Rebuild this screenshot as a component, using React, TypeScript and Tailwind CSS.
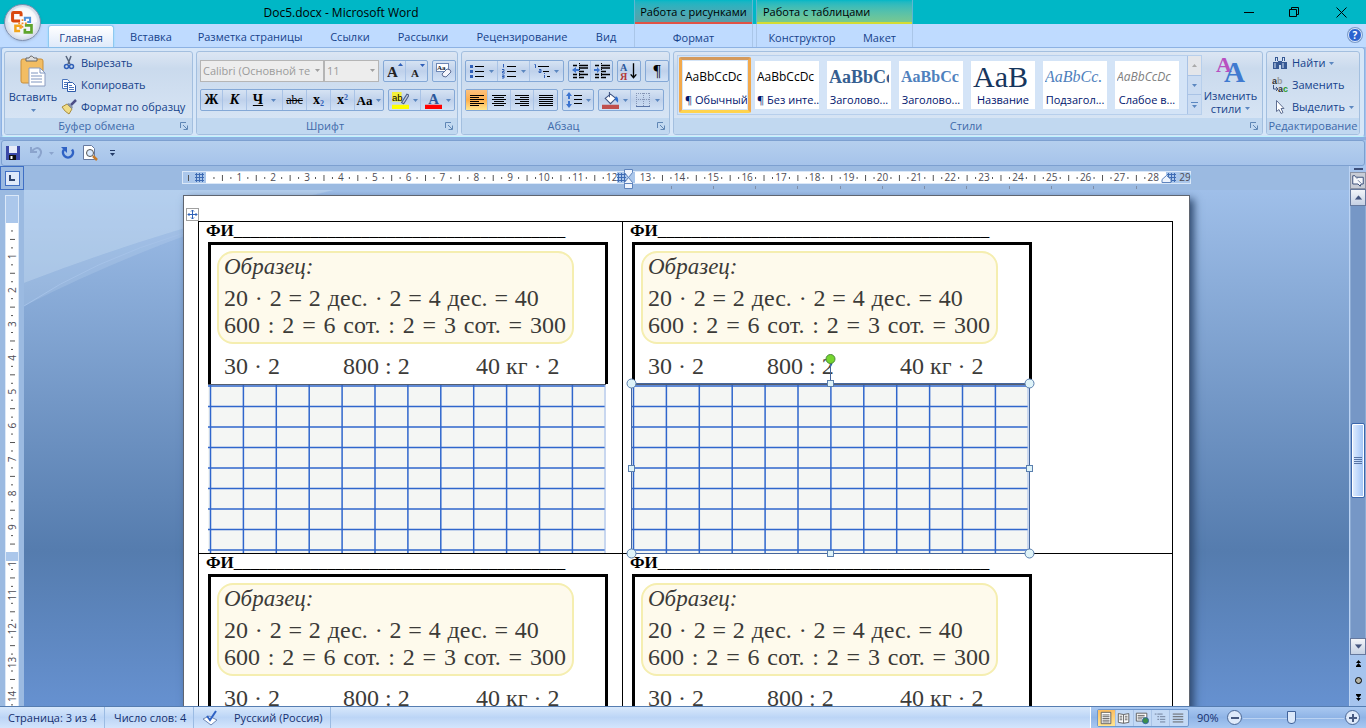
import { useState } from "react";
import type { ReactNode } from "react";
import clsx from "clsx";

const CM = 33.85;

const tabs = [
  { name: "Главная", width: "w-[66px]" },
  { name: "Вставка", width: "w-[74px]" },
  { name: "Разметка страницы", width: "w-[124px]" },
  { name: "Ссылки", width: "w-[76px]" },
  { name: "Рассылки", width: "w-[70px]" },
  { name: "Рецензирование", width: "w-[128px]" },
  { name: "Вид", width: "w-10" },
];

const styleCards = [
  { name: "¶ Обычный", sample: "AaBbCcDc", look: "font-['Open_Sans'] text-xs text-black", selected: true },
  { name: "¶ Без инте...", sample: "AaBbCcDc", look: "font-['Open_Sans'] text-xs text-black" },
  { name: "Заголово...", sample: "AaBbCc", look: "font-['Liberation_Serif'] text-lg font-bold text-[#365f91]" },
  { name: "Заголово...", sample: "AaBbCc", look: "font-['Liberation_Serif'] text-base font-bold text-[#4f81bd]" },
  { name: "Название", sample: "AaB", look: "font-['Liberation_Serif'] text-3xl text-[#17365d]" },
  { name: "Подзагол...", sample: "AaBbCc.", look: "font-['Liberation_Serif'] text-base italic text-[#4f81bd]" },
  { name: "Слабое в...", sample: "AaBbCcDc", look: "font-['Open_Sans'] text-xs italic text-[#808080]" },
];

function Drop({ className = "text-[#5b87c0]" }: { className?: string }) {
  return (
    <svg viewBox="0 0 5 3" className={clsx("h-[3px] w-[5px] shrink-0", className)}>
      <path d="M0 0h5L2.5 3z" fill="currentColor" />
    </svg>
  );
}

function Icon({ children, className = "size-4" }: { children: ReactNode; className?: string }) {
  return (
    <svg viewBox="0 0 16 16" fill="none" className={clsx("shrink-0", className)}>
      {children}
    </svg>
  );
}

function Group({ title, className, launcher = true, children }: { title: string; className?: string; launcher?: boolean; children: ReactNode }) {
  return (
    <section className={clsx("flex flex-col overflow-hidden rounded-[3px] border border-[#a3bfdf] bg-linear-to-b from-[#dce6f3] via-[#cadaed] via-20% to-[#dae7f6]", className)}>
      <div className="min-h-0 flex-1">{children}</div>
      <div className="flex h-4 shrink-0 items-center bg-[#c1d8f0] text-[#3e6aaa]">
        <h2 className={clsx("flex-1 text-center", launcher && "pl-3")}>{title}</h2>
        {launcher && (
          <button aria-label={title + ": параметры"} className="px-1">
            <svg viewBox="0 0 8 8" className="size-2" fill="none" stroke="#5f86b5">
              <path d="M.5 6V.5H6M3 3l4 4M7.5 3.5v4h-4" />
            </svg>
          </button>
        )}
      </div>
    </section>
  );
}

function Bar({ children }: { children: ReactNode }) {
  return (
    <div className="flex h-[22px] divide-x divide-[#a9c3e6] rounded-[2px] border border-[#84a8d6] bg-linear-to-b from-[#d6e3f3] via-[#bfd1eb] to-[#d2e2f6]">
      {children}
    </div>
  );
}

function Tool({ label, w = "w-[23px]", drop, active, children }: { label: string; w?: string; drop?: boolean; active?: boolean; children: ReactNode }) {
  return (
    <button
      aria-label={label}
      className={clsx(
        "flex items-center justify-center gap-1 font-['Liberation_Serif'] text-sm leading-none text-black",
        w,
        active && "bg-linear-to-b from-[#fcc17d] via-[#fdaf4c] to-[#ffe78f]"
      )}
    >
      {children}
      {drop && <Drop />}
    </button>
  );
}

function Lines({ d }: { d: string }) {
  return (
    <Icon>
      <path d={d} stroke="#000" />
    </Icon>
  );
}

function OfficeButton() {
  return (
    <button aria-label="Кнопка Office" className="absolute top-1 left-1 z-10 size-[37px] rounded-full border border-[#7f8fae] bg-radial from-white via-[#eef1f7] to-[#a9b6cf] shadow">
      <svg viewBox="0 0 37 37" className="size-full" fill="none">
        <path d="M3 18a15.500 15.500 0 0 1 31 0q-15 5-31 0" fill="#fff" opacity=".6" />
        <path d="M16 17H9q-1 0-1-1V9q0-1 1-1h7q1 0 1 1v3" stroke="#d9480f" strokeWidth="3.200" />
        <path d="M21 17v-3.500h5.500v4.500h-3" stroke="#4f93dc" strokeWidth="2.200" />
        <path d="M16 27.500h-5V22h5.500v3" stroke="#f2a51c" strokeWidth="2.600" />
        <path d="M21 21.500h7V29h-7v-4" stroke="#5fa52c" strokeWidth="2.800" />
        <path d="M14 19.500h2M17.500 19.500h2M21 19.500h2M18.500 15v2M18.500 22v2" stroke="#f08a2c" strokeWidth="1.800" />
      </svg>
    </button>
  );
}

function Header() {
  const [active, setActive] = useState("Главная");
  return (
    <header className="relative flex h-[47px] bg-linear-to-b from-[#00b7c6] from-[24px] to-[#bfdbff] to-[24px] text-[#15428b]">
      <OfficeButton />
      <div className="flex w-[634px] flex-col">
        <h1 className="flex h-6 items-center justify-center pt-0.5 pl-12 text-xs text-black">Doc5.docx - Microsoft Word</h1>
        <nav className="flex flex-1 pl-12">
          {tabs.map(({ name, width }) => (
            <button
              key={name}
              onClick={() => setActive(name)}
              className={clsx(
                "mt-0.5 h-[22px] rounded-t-[3px] pt-0.5 whitespace-nowrap",
                width,
                active === name && "border border-b-0 border-[#8fc8f0] bg-linear-to-b from-white to-[#dfeafa] shadow-[0_0_2px_#7fe0ff]"
              )}
            >
              {name}
            </button>
          ))}
        </nav>
      </div>
      <div className="flex w-[119px] flex-col border-x border-[#9db8d8]/60">
        <div className="flex h-6 items-center justify-center border-b-2 border-[#e05346] bg-linear-to-b from-[#00b7c6] to-[#58a0a8] pt-0.5 text-black">Работа с рисунками</div>
        <button className="flex-1 pt-1">Формат</button>
      </div>
      <div className="ml-[3px] flex w-[157px] flex-col border-x border-[#9db8d8]/60">
        <div className="flex h-6 items-center border-b-2 border-[#d5dc34] bg-linear-to-b from-[#00b7c6] to-[#78c890] pt-0.5 pl-1.5 text-black">Работа с таблицами</div>
        <div className="flex flex-1 pt-1">
          <button className="w-[90px]">Конструктор</button>
          <button className="flex-1">Макет</button>
        </div>
      </div>
      <div className="flex flex-1 flex-col">
        <div className="flex h-6 justify-end text-black">
          <button aria-label="Свернуть" className="flex w-[46px] items-center justify-center">
            <svg viewBox="0 0 11 11" className="size-[11px]" stroke="currentColor"><path d="M0 5.500h10" /></svg>
          </button>
          <button aria-label="Восстановить" className="flex w-11 items-center justify-center">
            <svg viewBox="0 0 11 11" className="size-[11px]" stroke="currentColor" fill="none"><path d="M.5 2.500h7v7h-7zM2.500 2.500v-2h7v7h-2" /></svg>
          </button>
          <button aria-label="Закрыть" className="flex w-[50px] items-center justify-center">
            <svg viewBox="0 0 11 11" className="size-[11px]" stroke="currentColor"><path d="M.5.5l10 10M10.500.5l-10 10" /></svg>
          </button>
        </div>
        <button aria-label="Справка" className="mt-1 mr-1 flex size-[14px] items-center justify-center self-end rounded-full border border-[#dbe8fb] bg-[#2a62cf] text-[10px] font-bold text-white ring-1 ring-[#7d9cc9]">?</button>
      </div>
    </header>
  );
}

function Clipboard() {
  return (
    <Group title="Буфер обмена" className="w-[189px]">
      <div className="flex">
        <button className="flex w-14 flex-col items-center pt-[3px]">
          <svg viewBox="0 0 28 32" className="h-8 w-7" fill="none">
            <rect x="2" y="4" width="22" height="24" rx="2" fill="#f2bd63" stroke="#c98f3b" />
            <path d="M7 6V3h3q2-4 5 0h3v3z" fill="#ddd" stroke="#666" />
            <path d="M10 13h11l5 5v13H10z" fill="#fff" stroke="#8a9cc0" />
            <path d="M21 13v5h5M12 18h7M12 21h11M12 24h11M12 27h11" stroke="#7f95bf" />
          </svg>
          <span className="h-4 pt-0.5">Вставить</span>
          <Drop className="mt-1.5 text-[#5b87c0]" />
        </button>
        <div className="flex flex-col">
          <button className="flex h-[22px] items-center gap-1">
            <Icon>
              <path d="M5 1l4 8M10 1L7 9" stroke="#56647c" strokeWidth="1.500" />
              <circle cx="5.500" cy="11.500" r="2" stroke="#2f5fb8" strokeWidth="1.500" />
              <circle cx="10.500" cy="11.500" r="2" stroke="#2f5fb8" strokeWidth="1.500" />
            </Icon>
            Вырезать
          </button>
          <button className="flex h-[22px] items-center gap-1">
            <Icon>
              <path d="M1.500 2.500h5l2 2v7h-7z" fill="#fff" stroke="#4a74bb" />
              <path d="M6.500 5.500h5l3 3v6h-8z" fill="#fff" stroke="#2d5aa8" />
              <path d="M8 8.500h3M8 10.500h5M8 12.500h5M3 5.500h3M3 7.500h3M3 9.500h3" stroke="#4a74bb" />
            </Icon>
            Копировать
          </button>
          <button className="flex h-[22px] items-center gap-1 whitespace-nowrap">
            <Icon>
              <path d="M1 8l5-3 5 5-3 5q-4-2-7-7" fill="#f0dc86" stroke="#a98c3c" />
              <path d="M6 5l2-1 4 4-1 2z" fill="#8893a8" />
              <path d="M10 6l5-5" stroke="#4c4f87" strokeWidth="2.500" />
            </Icon>
            Формат по образцу
          </button>
        </div>
      </div>
    </Group>
  );
}

function FontGroup() {
  return (
    <Group title="Шрифт" className="w-[262px]">
      <div className="flex flex-col gap-[7px] px-[3px] pt-2">
        <div className="flex gap-1">
          <div className="flex">
            <div className="relative">
              <select aria-label="Шрифт" disabled className="h-[22px] w-[124px] appearance-none overflow-hidden border border-[#b5b5b5] bg-[#ededed] pr-3 pl-0.5 text-[#9b9b9b]">
                <option>Calibri (Основной те</option>
              </select>
              <Drop className="absolute top-[9px] right-1 text-[#a0a0a0]" />
            </div>
            <div className="relative">
              <select aria-label="Размер шрифта" disabled className="h-[22px] w-[55px] appearance-none border border-[#b5b5b5] bg-[#ededed] pl-0.5 text-[#9b9b9b]">
                <option>11</option>
              </select>
              <Drop className="absolute top-[9px] right-1 text-[#a0a0a0]" />
            </div>
          </div>
          <Bar>
            <Tool label="Увеличить размер" w="w-[22px]"><Icon><path d="M11 3l2.500-3L16 3z" fill="#2f5fb8" /><text x="0" y="14" fill="#222" fontSize="15" fontWeight="bold">A</text></Icon></Tool>
            <Tool label="Уменьшить размер" w="w-[21px]"><Icon><path d="M11 1h5l-2.500 3z" fill="#2f5fb8" /><text x="2" y="14" fill="#222" fontSize="11" fontWeight="bold">A</text></Icon></Tool>
          </Bar>
          <Bar>
            <Tool label="Очистить формат" w="w-[22px]">
              <Icon>
                <rect x=".5" y=".5" width="12" height="8" fill="#fff" stroke="#6d87b5" />
                <text x="1" y="7" fill="#123" fontSize="7" fontWeight="bold">Aa</text>
                <path d="M6 11l5-5q4 0 4 3l-5 5q-4 0-4-3" fill="#f5f5fb" stroke="#5c6c93" />
              </Icon>
            </Tool>
          </Bar>
        </div>
        <div className="flex gap-1">
          <Bar>
            <Tool label="Полужирный" w="w-[22px]"><b>Ж</b></Tool>
            <Tool label="Курсив" w="w-6"><b className="italic">К</b></Tool>
            <Tool label="Подчеркнутый" w="w-9" drop><b className="mr-1 underline">Ч</b></Tool>
            <Tool label="Зачеркнутый" w="w-6"><span className="text-xs line-through">abc</span></Tool>
            <Tool label="Подстрочный" w="w-6"><b>x<sub className="text-[8px] text-[#2f5fb8]">2</sub></b></Tool>
            <Tool label="Надстрочный" w="w-6"><b>x<sup className="text-[8px] text-[#2f5fb8]">2</sup></b></Tool>
            <Tool label="Регистр" w="w-7" drop><b className="text-[13px]">Aa</b></Tool>
          </Bar>
          <Bar>
            <Tool label="Цвет выделения" w="w-8" drop>
              <Icon className="size-[17px]">
                <rect width="9" height="9" fill="#f4f13c" />
                <text x="0" y="8" fill="#000" fontSize="9" fontFamily="Liberation Sans">ab</text>
                <path d="M9 10l5-8 2 1-5 8z" fill="#c3cbe0" stroke="#4c6088" />
                <path d="M0 12h16v4H0z" fill="#ff0" />
              </Icon>
            </Tool>
            <Tool label="Цвет текста" w="w-[33px]" drop>
              <Icon className="size-[17px]">
                <text x="3" y="11" fill="#2b579a" fontSize="14" fontWeight="bold">A</text>
                <path d="M0 12h16v4H0z" fill="red" />
              </Icon>
            </Tool>
          </Bar>
        </div>
      </div>
    </Group>
  );
}

function Paragraph() {
  return (
    <Group title="Абзац" className="w-[209px]">
      <div className="flex flex-col gap-[7px] px-[3px] pt-2">
        <div className="flex gap-1">
          <Bar>
            <Tool label="Маркеры" w="w-8" drop>
              <Icon><path d="M6 3.500h9M6 8.500h9M6 13.500h9" stroke="#000" /><path d="M1 2h3v3H1zM1 7h3v3H1zM1 12h3v3H1z" fill="#2f5fb8" /></Icon>
            </Tool>
            <Tool label="Нумерация" w="w-8" drop>
              <Icon><path d="M6 3.500h9M6 8.500h9M6 13.500h9" stroke="#000" /><path d="M2.500 1v3.500M1 6.500h2v2H1.500v1.500H4M1 12h2v3H1m0-1.500h2" stroke="#2f5fb8" /></Icon>
            </Tool>
            <Tool label="Многоуровневый список" w="w-[33px]" drop>
              <Icon><path d="M4 3.500h11M9 8.500h6M13 13.500h3" stroke="#000" /><path d="M.5 1.500h1V5M5 6.500h2v3H5V8h2M10.500 10v1m0 1v3" stroke="#2f5fb8" /></Icon>
            </Tool>
          </Bar>
          <Bar>
            <Tool label="Уменьшить отступ" w="w-[22px]"><Icon><path d="M1 2.500h4M7 2.500h9M7 5h9M7 8.500h5M1 11.500h4M7 11.500h9M1 14.500h4M7 14.500h5" stroke="#000" strokeWidth="1.300" /><path d="M7.500 0v16" stroke="#000" strokeDasharray="1 1" /><path d="M0 7l4-3v2h3v2H4v2z" fill="#3c74d0" /></Icon></Tool>
            <Tool label="Увеличить отступ" w="w-[21px]"><Icon><path d="M1 2.500h4M7 2.500h9M7 5h9M7 8.500h5M1 11.500h4M7 11.500h9M1 14.500h4M7 14.500h5" stroke="#000" strokeWidth="1.300" /><path d="M7.500 0v16" stroke="#000" strokeDasharray="1 1" /><path d="M6 7L3 4v2H0v2h3v2z" fill="#3c74d0" /></Icon></Tool>
          </Bar>
          <Bar>
            <Tool label="Сортировка" w="w-[22px]">
              <Icon className="size-[18px]">
                <text x="0" y="8" fill="#2b579a" fontSize="9" fontWeight="bold">А</text>
                <text x="0" y="16" fill="#b33838" fontSize="9" fontWeight="bold">Я</text>
                <path d="M12 1v13M9.500 11l2.500 3 2.500-3" stroke="#000" strokeWidth="1.200" />
              </Icon>
            </Tool>
          </Bar>
          <Bar>
            <Tool label="Все знаки" w="w-[22px]"><span className="text-base leading-none">¶</span></Tool>
          </Bar>
        </div>
        <div className="flex gap-1">
          <Bar>
            <Tool label="По левому краю" w="w-[22px]" active><Lines d="M1 3.500h14M1 5.500h9M1 7.500h14M1 9.500h9M1 11.500h14M1 13.500h9" /></Tool>
            <Tool label="По центру"><Lines d="M1 3.500h14M3 5.500h10M1 7.500h14M3 9.500h10M1 11.500h14M3 13.500h10" /></Tool>
            <Tool label="По правому краю"><Lines d="M1 3.500h14M6 5.500h9M1 7.500h14M6 9.500h9M1 11.500h14M6 13.500h9" /></Tool>
            <Tool label="По ширине"><Lines d="M1 3.500h14M1 5.500h14M1 7.500h14M1 9.500h14M1 11.500h14M1 13.500h14" /></Tool>
          </Bar>
          <Bar>
            <Tool label="Междустрочный интервал" w="w-[30px]" drop>
              <Icon><path d="M0 4l3-4 3 4zM0 12l3 4 3-4zM2 4h2v3H2zM2 9h2v3H2z" fill="#3c74d0" /><path d="M8 3.500h8M8 7.500h8M8 11.500h8" stroke="#000" /></Icon>
            </Tool>
          </Bar>
          <Bar>
            <Tool label="Заливка" w="w-8" drop>
              <Icon className="size-[17px]">
                <path d="M3 6l5-4 5 4-5 5z" fill="#fff" stroke="#3f5482" />
                <path d="M7 0v5" stroke="#3f5482" />
                <path d="M13 4q3 1 2 6l-3-3z" fill="#2f6fcf" />
                <path d="M0 12h16v4H0z" fill="#c0504d" />
              </Icon>
            </Tool>
            <Tool label="Границы" w="w-8" drop>
              <Icon><path d="M1.500 1v13M8.500 1v13M14.500 1v13M1 1.500h14M1 7.500h14" stroke="#8595b5" strokeDasharray="1 1" /><path d="M1 14.500h14" stroke="#5a75a8" /></Icon>
            </Tool>
          </Bar>
        </div>
      </div>
    </Group>
  );
}

function Styles() {
  return (
    <Group title="Стили" className="min-w-0 flex-1">
      <div className="flex justify-between px-[3px] pt-[3px]">
        <div className="flex h-[60px] border border-[#b7cfec] bg-[#d4e4f7]">
          {styleCards.map(({ name, sample, look, selected }, i) => (
            <button key={i} className={clsx("my-px w-[72px] border-[3px] p-px first:ml-px last-of-type:mr-1", selected ? "rounded-[2px] border-[#f2a94c] border-t-[#d49a5c] border-b-[#ffd34e]" : "border-transparent")}>
              <span className="flex h-full flex-col overflow-hidden bg-white px-0.5">
                <span className={clsx("flex h-[31px] items-center overflow-hidden whitespace-nowrap leading-none", look)}>{sample}</span>
                <span className="text-center leading-4 whitespace-nowrap text-[#00156e]">{name}</span>
              </span>
            </button>
          ))}
          <div className="flex w-[14px] flex-col divide-y divide-[#a9c3e6] border-l border-[#a9c3e6] bg-[#cbdcf2]">
            <button aria-label="Вверх" disabled className="flex flex-1 items-center justify-center bg-[#e4e6ea]"><Drop className="rotate-180 text-[#aaa]" /></button>
            <button aria-label="Вниз" className="flex flex-1 items-center justify-center"><Drop /></button>
            <button aria-label="Все стили" className="flex flex-1 flex-col items-center justify-center gap-0.5"><span className="h-px w-[7px] bg-[#5b87c0]" /><Drop /></button>
          </div>
        </div>
        <button className="flex w-[60px] flex-col items-center">
          <svg viewBox="0 0 32 32" className="size-8" fontFamily="Liberation Serif" fontWeight="bold">
            <text x="1" y="17" fontSize="22" fill="#b84fc0">A</text>
            <text x="9" y="27" fontSize="29" fill="#3f7ad0">A</text>
          </svg>
          <span className="pt-0.5 leading-[13px]">Изменить</span>
          <span className="flex items-center gap-1 leading-[13px]">стили <Drop /></span>
        </button>
      </div>
    </Group>
  );
}

function Editing() {
  return (
    <Group title="Редактирование" className="w-[94px]" launcher={false}>
      <div className="flex flex-col pl-[5px]">
        <button className="flex h-[22px] items-center gap-1">
          <Icon>
            <path d="M3 2h3v4H3zM10 2h3v4h-3zM1 7h6v7H1zM9 7h6v7H9zM6 6h4v4H6z" fill="#385a94" />
            <path d="M3 8v5M11 8v5M4.500 3v3M11.500 3v3" stroke="#d8e5f8" />
          </Icon>
          Найти <Drop />
        </button>
        <button className="flex h-[22px] items-center gap-1">
          <Icon>
            <text x="0" y="7" fill="#333" fontSize="9" fontWeight="bold" fontFamily="Liberation Sans">a<tspan fill="#9a9a9a">b</tspan></text>
            <text x="6" y="15" fill="#333" fontSize="9" fontWeight="bold" fontFamily="Liberation Sans">a<tspan fill="#2a9a2a">c</tspan></text>
            <path d="M1.500 8v4h4M4 10l2 2-2 2" stroke="#3f5482" />
          </Icon>
          Заменить
        </button>
        <button className="flex h-[22px] items-center gap-1">
          <Icon><path d="M4.500 1.500v11l2.500-2 2 4 2-1-2-4h3z" fill="#fff" stroke="#5f6f92" /></Icon>
          Выделить <Drop />
        </button>
      </div>
    </Group>
  );
}

function QuickAccess() {
  return (
    <div className="mx-px flex h-[26px] items-center rounded-[3px] border border-[#7da0d0] bg-linear-to-b from-[#b5cfee] to-[#a6c3ea] pl-[3px]">
      <button aria-label="Сохранить">
        <Icon><path d="M1 1h14v14H1z" fill="#3b49a8" /><path d="M4 1h8v7H4z" fill="#e8ecf8" /><path d="M4 10h7v5H4z" fill="#111" /><path d="M5.500 11h2v3h-2z" fill="#fff" /></Icon>
      </button>
      <button aria-label="Отменить" disabled className="ml-2 flex items-center gap-1">
        <Icon><path d="M2 2v5h6M3 6q5-5 8-1.500T9 13" stroke="#8ba4cd" strokeWidth="2" /></Icon>
        <Drop className="text-[#8ba4cd]" />
      </button>
      <button aria-label="Повторить" className="ml-1.5">
        <Icon><path d="M4 4.500a5 5 0 1 0 8 0" stroke="#2f62c4" strokeWidth="2.500" /><path d="M1 2h6v6z" fill="#2f62c4" /></Icon>
      </button>
      <button aria-label="Предварительный просмотр" className="ml-1.5">
        <Icon><path d="M1.500.5h8l3 3v11h-11z" fill="#fff" stroke="#66799e" /><circle cx="8" cy="8" r="3.500" fill="#dcecff" stroke="#555" /><path d="M11 11l4 4" stroke="#c77a28" strokeWidth="2.500" /></Icon>
      </button>
      <button aria-label="Настройка панели" className="ml-3 flex flex-col items-center gap-0.5 text-[#223a66]"><span className="h-px w-[5px] bg-current" /><Drop className="text-[#223a66]" /></button>
    </div>
  );
}

function HashMark({ x }: { x: number }) {
  return <path d={`M${x} 8.500h9M${x} 11.500h9M${x} 14.500h9M${x + 1.5} 7v9M${x + 4.5} 7v9M${x + 7.5} 7v9`} stroke="#3f6cb4" />;
}

function HorizontalRuler() {
  return (
    <svg viewBox="0 0 1009 24" className="mx-auto h-6 w-[1009px] shrink-0 font-['Open_Sans'] text-[10px]" fill="none">
      <rect y="5" width="1009" height="13" fill="#dbe8f8" />
      <rect x="1" y="6" width="23" height="11" fill="#abc7eb" />
      <rect x="24" y="6" width="960" height="11" fill="#fff" />
      <rect x="984" y="6" width="24" height="11" fill="#abc7eb" />
      <rect x="435" y="6" width="18" height="11" fill="#abc7eb" />
      <path d="M6.500 9v6" stroke="#555" />
      {Array.from({ length: 29 }, (_, i) => {
        const x = 23.5 + i * CM;
        return (
          <g key={i}>
            {i < 28 && i !== 12 && <path d={`M${x + CM / 2} 9v6M${x + CM / 4} 11v2M${x + CM * 0.75} 11v2`} stroke="#555" />}
            {i > 0 && <text x={x} y="15" textAnchor="middle" fill="#4c4c55">{i}</text>}
          </g>
        );
      })}
      <text x="1003" y="15" textAnchor="middle" fill="#4c4c55">29</text>
      <HashMark x={13} />
      <HashMark x={435} />
      <HashMark x={985} />
      <path d="M442.500 3.500v3l4 5-4 5v6h8v-6l-4-5 4-5v-3zM442.500 17.500h8" fill="#eef4fd" stroke="#5f84bd" />
      <path d="M980 16.500v-3l4.500-4 4.500 4v3z" fill="#eef4fd" stroke="#5f84bd" />
      <path d="M489.500 20v3M531.500 20v3M573.500 20v3M615.500 20v3M658.500 20v3M700.500 20v3M742.500 20v3M784.500 20v3M827.500 20v3M869.500 20v3M911.500 20v3M954.500 20v3" stroke="#7d8da8" />
    </svg>
  );
}

function VerticalRuler() {
  return (
    <svg viewBox="0 0 24 516" className="h-[516px] w-6 shrink-0 bg-[#9bbae1] font-['Open_Sans'] text-[10px]" fill="none">
      <rect x="5" y="5" width="14" height="511" fill="#dbe8f8" />
      <rect x="6" y="6" width="12" height="27" fill="#abc7eb" />
      <rect x="6" y="33" width="12" height="483" fill="#fff" />
      {Array.from({ length: 15 }, (_, i) => {
        const y = 32.5 + i * CM;
        return (
          <g key={i}>
            <path d={`M10 ${y + CM / 2}h5M11 ${y + CM / 4}h2M11 ${y + CM * 0.75}h2`} stroke="#555" />
            {i > 0 && <text transform={`translate(16 ${y}) rotate(-90)`} textAnchor="middle" fill="#4c4c55">{i}</text>}
          </g>
        );
      })}
      <rect x="6" y="362" width="12" height="9" fill="#abc7eb" />
    </svg>
  );
}

function SquaredPaper({ selected }: { selected?: boolean }) {
  return (
    <div className="relative h-[169px] w-[398px]">
      <svg viewBox="0 0 398 169" className="size-full" fill="none">
        <rect width="398" height="169" fill="#f4f6f4" />
        {Array.from({ length: 9 }, (_, i) => (
          <path key={i} d={`M0 ${2 + i * 20.5}h397`} stroke="#2f66cc" strokeWidth="1.400" />
        ))}
        {Array.from({ length: 12 }, (_, i) => (
          <path key={i} d={`M${2.5 + i * 32.9} 0v169`} stroke="#2f66cc" strokeWidth="1.500" />
        ))}
        <path d="M397 0v169" stroke="#9db8ea" />
        <path d="M0 .5h398" stroke="#555f70" />
      </svg>
      {selected && (
        <svg viewBox="0 0 412 209" className="absolute -top-[33px] -left-[7px] z-10 h-[209px] w-[412px]" stroke="#5b7fae" fill="#dff3f8">
          <path d="M7.500 32.500h398v170h-398zM206.500 8v24" fill="none" stroke="#45669c" />
          <circle cx="206.500" cy="8" r="4.500" fill="#76d62e" stroke="#4c8a3a" />
          {[7.5, 405.5].map((x) => (
            <g key={x}>
              <circle cx={x} cy="32.500" r="4.500" />
              <circle cx={x} cy="202.500" r="4.500" />
              <rect x={x - 3} y="114.500" width="6" height="6" />
            </g>
          ))}
          <rect x="203.500" y="29.500" width="6" height="6" />
          <rect x="203.500" y="199.500" width="6" height="6" />
        </svg>
      )}
    </div>
  );
}

function Worksheet({ selected }: { selected?: boolean }) {
  return (
    <div className="h-[331px]">
      <p className="h-5 pl-[7px] text-[17px] leading-[18px] font-bold whitespace-nowrap">ФИ<span className="font-normal">{"_".repeat(39)}</span></p>
      <div className="ml-[9px] h-[142px] w-[400px] border-[3px] border-b-0 border-black pt-1.5 pl-1.5 text-2xl whitespace-nowrap text-[#3c3b38]">
        <div className="h-[93px] w-[357px] rounded-2xl border-2 border-[#f5eeb0] bg-[#fefaec] pl-[5px]">
          <p className="pb-1 text-[23px] leading-7 italic">Образец:</p>
          <p className="flex justify-between pr-[33px] leading-[27px]">{"20 · 2 = 2 дес. · 2 = 4 дес. = 40".split(" ").map((part, i) => <span key={i}>{part} </span>)}</p>
          <p className="flex justify-between pr-1.5 leading-[27px]">{"600 : 2 = 6 сот. : 2 = 3 сот. = 300".split(" ").map((part, i) => <span key={i}>{part} </span>)}</p>
        </div>
        <p className="grid grid-cols-[119px_133px_auto] pt-2 pl-[7px] leading-7">
          <span>30 · 2</span>
          <span>800 : 2</span>
          <span>40 кг · 2</span>
        </p>
      </div>
      <div className={selected ? "ml-2" : "ml-[9px]"}>
        <SquaredPaper selected={selected} />
      </div>
    </div>
  );
}

function Page() {
  return (
    <article className="mt-[5px] h-[1400px] w-[1007px] shrink-0 border border-[#5f6570] bg-white pt-[25px] pl-[14px] font-['Liberation_Serif',serif] text-black shadow-[4px_4px_8px_#2f4a70]">
      <table className="w-[975px] table-fixed border-collapse">
        <colgroup>
          <col className="w-[424px]" />
          <col />
        </colgroup>
        <tbody>
          {[0, 1].map((row) => (
            <tr key={row}>
              <td className="border border-black p-0 align-top"><Worksheet /></td>
              <td className="border border-black p-0 align-top"><Worksheet selected={row === 0} /></td>
            </tr>
          ))}
        </tbody>
      </table>
      <button aria-label="Выделить таблицу" className="absolute top-[18px] left-[3px] flex size-[13px] items-center justify-center border border-[#a0a0a0] bg-white">
        <svg viewBox="0 0 11 11" className="size-[11px]" stroke="#2f62b8" fill="none"><path d="M5.500 1v9M1 5.500h9M4 2.500l1.500-1.500L7 2.500M4 8.500l1.500 1.500L7 8.500M2.500 4L1 5.500 2.500 7M8.500 4L10 5.500 8.500 7" /></svg>
      </button>
    </article>
  );
}

function Scrollbar() {
  return (
    <aside className="flex w-[17px] flex-col border-l border-[#bcd4f4] bg-[#a6c4ee]">
      <div className="mx-auto my-[2px] h-0.5 w-[9px] shrink-0 bg-[#3c4f7a]" />
      <button aria-label="Линейка" className="flex h-[17px] items-center justify-center border border-[#8b93a5] bg-[#c8ccd6]">
        <Icon className="size-3"><path d="M1 1h3l2 2h9v9h-3l-1 3-3-3H1z" fill="#f4f6fb" stroke="#3c4f7a" strokeWidth="1.300" /><path d="M8 7l4 4M5 3l2 2" stroke="#3c4f7a" /></Icon>
      </button>
      <button aria-label="Прокрутить вверх" className="flex h-[17px] items-center justify-center border border-[#66799e] bg-linear-to-b from-[#f2f4f9] to-[#c6d1e4]"><Drop className="scale-150 rotate-180 text-[#44557f]" /></button>
      <div className="flex min-h-0 flex-1 flex-col border-x border-[#8eacd4] bg-[#7697c6]">
        <div className="flex-[218]" />
        <div className="flex h-[75px] flex-col items-center justify-center gap-px rounded-[2px] border border-[#3b67ac] bg-linear-to-r from-[#e4effd] via-[#bfd8fb] to-[#9fc2f5] ring-1 ring-white ring-inset">
          {[0, 1, 2, 3].map((n) => <span key={n} className="h-px w-2 bg-[#5875a5]" />)}
        </div>
        <div className="flex-[140]" />
      </div>
      <button aria-label="Прокрутить вниз" className="flex h-[17px] items-center justify-center border border-[#66799e] bg-linear-to-b from-[#f2f4f9] to-[#c6d1e4]"><Drop className="scale-150 text-[#44557f]" /></button>
      <div className="flex h-[51px] flex-col items-center justify-around">
        <button aria-label="Предыдущая страница"><svg viewBox="0 0 7 7" className="size-[7px]"><path d="M3.500 0L6 3H1zM3.500 3L6 6H1zM1 6h5v1H1z" /></svg></button>
        <button aria-label="Объект перехода" className="size-[7px] rounded-full border border-black bg-[#b5b3a5]" />
        <button aria-label="Следующая страница"><svg viewBox="0 0 7 7" className="size-[7px]"><path d="M1 0h5v1H1zM1 1h5L3.500 4zM1 4h5L3.500 7z" /></svg></button>
      </div>
    </aside>
  );
}

function StatusBar() {
  const [zoom, setZoom] = useState(90);
  return (
    <footer className="flex h-[22px] items-center border-t border-[#567db1] bg-linear-to-b from-[#d8e8fb] via-[#bcd5f6] via-50% to-[#d3e5fc] text-[#15306f]">
      <span className="w-[104px] pl-2">Страница: 3 из 4</span>
      <span className="flex h-full w-[89px] items-center border-l border-[#9bbbe3] pl-[9px]">Число слов: 4</span>
      <span className="flex h-full items-center border-l border-[#9bbbe3] px-2">
        <Icon><path d="M1 9l6-3 8 4-6 5z" fill="#fff" stroke="#6d87b5" /><path d="M5 6l3 4 6-9" stroke="#2f62c4" strokeWidth="2" /></Icon>
      </span>
      <span className="flex h-full w-[105px] items-center border-r border-[#9bbbe3] pl-2">Русский (Россия)</span>
      <div className="ml-auto flex h-full w-[276px] items-center border-l border-white bg-linear-to-b from-[#a9c8f1] via-[#8fb4e6] to-[#a8c8f2] pl-1.5">
        <div className="flex h-[18px] divide-x divide-[#a9c3e6] rounded-[2px] border border-[#6f97cd] bg-[#c3d9f5]">
          <button aria-label="Разметка страницы" className="w-[18px] bg-linear-to-b from-[#fbbd60] to-[#ffe591] px-px"><Icon className="size-[14px]"><path d="M2.500 1.500h11v13h-11z" fill="#fff" stroke="#555" /><path d="M4 4.500h8M4 6.500h8M4 8.500h8M4 10.500h8M4 12.500h8" stroke="#555" /></Icon></button>
          <button aria-label="Режим чтения" className="w-[18px] px-px"><Icon className="size-[14px]"><path d="M1.500 3l6 1 6-1v10l-6 1-6-1zM7.500 4v10" fill="#fff" stroke="#555" /><path d="M3 6h3M3 8h3M3 10h3M9 6h3M9 8h3M9 10h3" stroke="#555" /></Icon></button>
          <button aria-label="Веб-документ" className="w-[18px] px-px"><Icon className="size-[14px]"><path d="M1.500 2.500h12v9h-12z" fill="#fff" stroke="#555" /><path d="M3 5h8M3 7h8M3 9h5" stroke="#555" /><circle cx="12" cy="11" r="3.500" fill="#3c8f4a" stroke="#2b60a8" /></Icon></button>
          <button aria-label="Структура" className="w-[18px] px-px"><Icon className="size-[14px]"><path d="M2 3.500h2M5 3.500h6M5 6.500h2M8 6.500h6M5 9.500h2M8 9.500h6M8 12.500h6" stroke="#66758f" /></Icon></button>
          <button aria-label="Черновик" className="w-[18px] px-px"><Icon className="size-[14px]"><path d="M2 3.500h12M2 6.500h12M2 9.500h12M2 12.500h12" stroke="#555" /></Icon></button>
        </div>
        <output className="w-[38px] pl-2">{zoom}%</output>
        <button aria-label="Уменьшить" onClick={() => setZoom(zoom - 10)} className="flex size-[15px] items-center justify-center rounded-full border border-[#4a6795] bg-[#dfeafa]"><span className="h-0.5 w-2 bg-[#47597f]" /></button>
        <input
          type="range"
          aria-label="Масштаб"
          min={0}
          max={190}
          value={zoom}
          onChange={(e) => setZoom(Number(e.target.value))}
          className="mx-px h-4 w-[101px] appearance-none bg-linear-to-b from-transparent from-[8px] via-[#e3eefc] via-[8px] to-transparent to-[9px] [&::-webkit-slider-thumb]:h-[13px] [&::-webkit-slider-thumb]:w-[9px] [&::-webkit-slider-thumb]:appearance-none [&::-webkit-slider-thumb]:rounded-b-[4px] [&::-webkit-slider-thumb]:border [&::-webkit-slider-thumb]:border-[#41639b] [&::-webkit-slider-thumb]:bg-[#dbe8fa]"
        />
        <button aria-label="Увеличить" onClick={() => setZoom(zoom + 10)} className="flex size-[15px] items-center justify-center rounded-full border border-[#4a6795] bg-[#dfeafa]">
          <svg viewBox="0 0 8 8" className="size-2" stroke="#47597f" strokeWidth="2"><path d="M0 4h8M4 0v8" /></svg>
        </button>
      </div>
    </footer>
  );
}

export default function App() {
  return (
    <div className="flex h-screen flex-col overflow-hidden bg-[#a4c2ea] font-['Open_Sans',sans-serif] text-[11px] leading-4 text-[#15428b]">
      <Header />
      <div className="mx-px flex h-[90px] gap-[3px] rounded-[3px] border border-[#8db2e3] border-b-[#bdf3fd] bg-[#d6e6f8] px-0.5 pt-[3px] pr-1 pb-px">
        <Clipboard />
        <FontGroup />
        <Paragraph />
        <Styles />
        <Editing />
      </div>
      <div className="h-[3px] bg-[#8eb0e0]" />
      <QuickAccess />
      <main className="flex min-h-0 flex-1">
        <div className="flex min-w-0 flex-1 flex-col">
          <div className="flex h-6 bg-[#9bbae1]">
            <button aria-label="Позиция табуляции" className="flex size-6 items-center justify-center border border-[#3f6fc4] bg-[#9bbae1]">
              <span className="flex size-[15px] items-center justify-center border border-[#3f6fc4] bg-[#dfeafa]"><span className="size-[6px] border-b-2 border-l-2 border-[#2f456f]" /></span>
            </button>
            <HorizontalRuler />
          </div>
          <div className="flex min-h-0 flex-1 overflow-hidden">
            <VerticalRuler />
            <div className="relative flex min-w-0 flex-1 items-start overflow-hidden bg-linear-to-b from-[#9fbfe9] via-[#557cae] via-70% to-[#6691d0]">
              <svg viewBox="0 0 310 130" className="absolute top-0 left-0 h-[130px] w-[310px]" fill="none">
                <path d="M0 0h310Q150 35 0 93z" fill="#cfe2f5" opacity=".45" />
                <path d="M0 93Q150 35 310 0Q150 40 0 116z" fill="#cfe2f5" opacity=".2" />
                <path d="M0 116Q70 70 160 43" stroke="#a5c2e8" />
              </svg>
              <div className="relative mx-auto"><Page /></div>
            </div>
          </div>
        </div>
        <Scrollbar />
      </main>
      <StatusBar />
    </div>
  );
}
